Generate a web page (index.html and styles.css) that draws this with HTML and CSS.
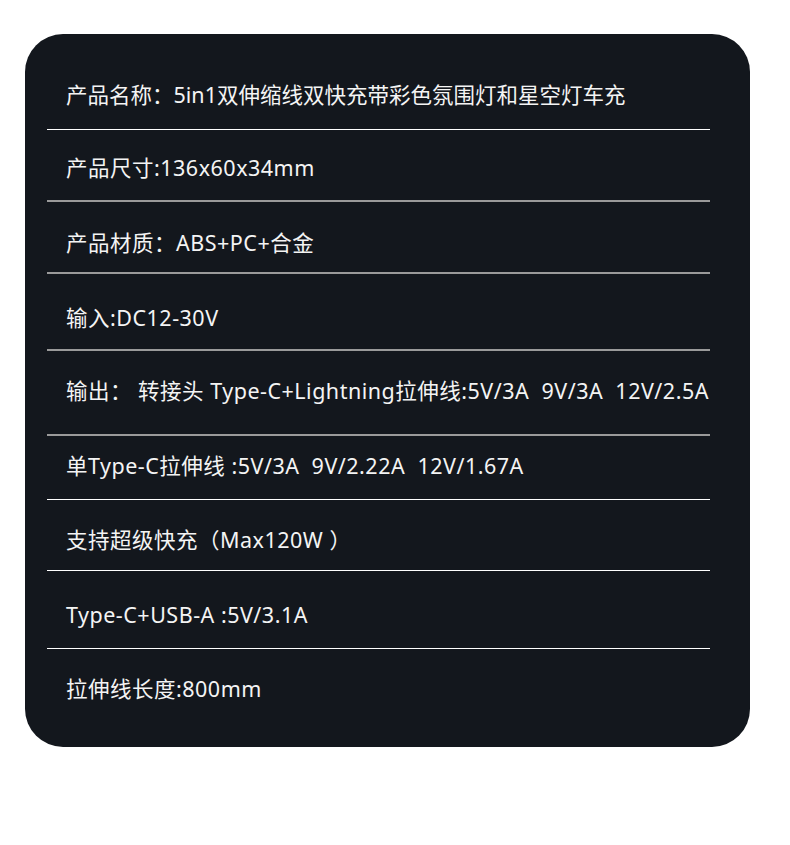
FILE: index.html
```html
<!DOCTYPE html>
<html lang="zh-CN">
  <head>
    <meta charset="UTF-8" />
    <meta name="viewport" content="width=device-width, initial-scale=1.0" />
    <title>产品参数</title>
    <link rel="stylesheet" href="styles.css">
  </head>
  <body>
    <!-- Spec card -->
    <div class="spec-card">
      <div class="spec-row line-light">产品名称：5in1双伸缩线双快充带彩色氛围灯和星空灯车充</div>
      <div class="spec-row line-gray">产品尺寸:136x60x34mm</div>
      <div class="spec-row line-gray">产品材质：ABS+PC+合金</div>
      <div class="spec-row line-gray">输入:DC12-30V</div>
      <div class="spec-row line-gray">输出： 转接头 Type-C+Lightning拉伸线:5V/3A  9V/3A  12V/2.5A</div>
      <div class="spec-row line-light">单Type-C拉伸线 :5V/3A  9V/2.22A  12V/1.67A</div>
      <div class="spec-row line-light">支持超级快充（Max120W ）</div>
      <div class="spec-row line-light">Type-C+USB-A :5V/3.1A</div>
      <div class="spec-row">拉伸线长度:800mm</div>
    </div>
  </body>
</html>
```

FILE: styles.css
```css
* {
  margin: 0;
  padding: 0;
  box-sizing: border-box;
}

body {
  background-color: #ffffff;
  font-family: "Noto Sans", "Noto Sans CJK SC", sans-serif;
  padding: 34px 40px 0 25px;
}

.spec-card {
  background-color: #13171d;
  border-radius: 38px;
  width: 725px;
  height: 713px;
  padding: 0 40px 0 22px;
  display: flex;
  flex-direction: column;
}

.spec-row {
  color: #f4f4f4;
  font-size: 21.5px;
  letter-spacing: 0.5px;
  line-height: 30px;
  padding-left: 19px;
  white-space: pre;
}

.line-light {
  border-bottom: 1px solid #ffffff;
}

.line-gray {
  border-bottom: 2px solid #9a9a9a;
}

/* row spacing follows the original layout */
.spec-row:nth-child(1) { padding-top: 46px; padding-bottom: 19px; letter-spacing: 0; }
.spec-row:nth-child(2) { padding-top: 23px; padding-bottom: 17px; }
.spec-row:nth-child(3) { padding-top: 26px; padding-bottom: 14px; }
.spec-row:nth-child(4) { padding-top: 29px; padding-bottom: 16px; }
.spec-row:nth-child(5) { padding-top: 25px; padding-bottom: 28px; }
.spec-row:nth-child(6) { padding-top: 15px; padding-bottom: 18px; }
.spec-row:nth-child(7) { padding-top: 25px; padding-bottom: 15px; }
.spec-row:nth-child(8) { padding-top: 29px; padding-bottom: 18px; }
.spec-row:nth-child(9) { padding-top: 25px; }
```
